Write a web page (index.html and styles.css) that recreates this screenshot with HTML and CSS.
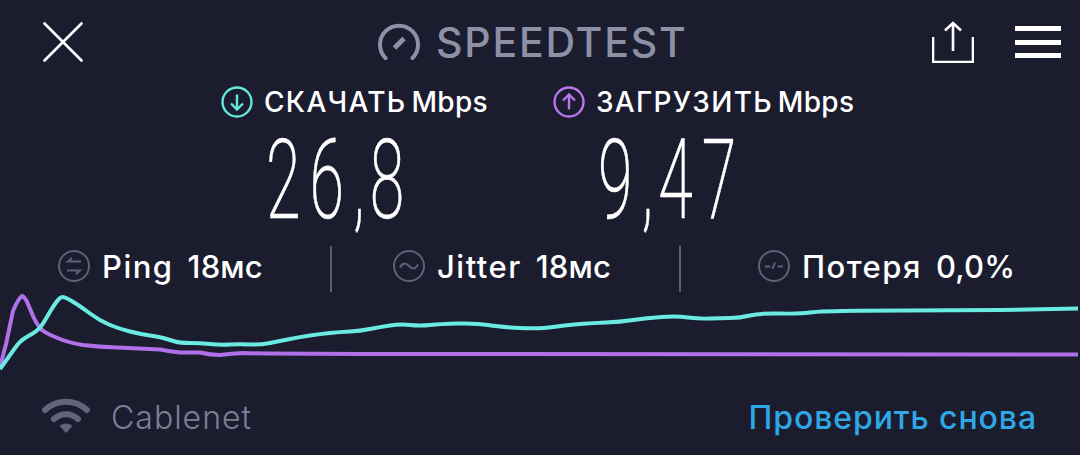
FILE: index.html
```html
<!DOCTYPE html>
<html lang="ru">
<head>
<meta charset="utf-8">
<title>Speedtest</title>
<link rel="stylesheet" href="styles.css">
</head>
<body>
<main class="screen">
  <header class="top">
    <svg class="ic-close" viewBox="0 0 40 40"><path d="M1.500 1.500 38.500 38.500M38.500 1.500 1.500 38.500"/></svg>
    <div class="brand">
      <svg class="ic-gauge" viewBox="0 0 42 38"><path d="M7.500 35A19 19 0 1 1 34.500 35"/><path class="needle" d="M16.500 25 26 15.500"/></svg>
      <span class="brand-name">SPEEDTEST</span>
    </div>
    <svg class="ic-share" viewBox="0 0 42 42"><path d="M1 16V41H41V16"/><path d="M21 30V2M13 9.500 21 2 29 9.500"/></svg>
    <div class="menu"><i></i><i></i><i></i></div>
  </header>
  <section class="labels">
    <div class="label">
      <svg class="ic-round dl" viewBox="0 0 32 32"><circle cx="16" cy="16" r="14.500"/><path d="M16 8.500V23M10 17.500 16 23.500 22 17.500"/></svg>
      <span class="label-a">СКАЧАТЬ</span><span class="label-b">Mbps</span>
    </div>
    <div class="label">
      <svg class="ic-round ul" viewBox="0 0 32 32"><circle cx="16" cy="16" r="14.500"/><path d="M16 23.500V9M10 14.500 16 8.500 22 14.500"/></svg>
      <span class="label-a">ЗАГРУЗИТЬ</span><span class="label-b">Mbps</span>
    </div>
  </section>
  <section class="values">
    <div class="value">26<span class="comma">,</span>8</div>
    <div class="value">9<span class="comma">,</span>47</div>
  </section>
  <section class="stats">
    <div class="stat stat-ping">
      <svg class="ic-stat" viewBox="0 0 32 32"><circle cx="16" cy="16" r="15"/><path d="M23 11.500H10L14 8M9 20.500H22L18 24"/></svg>
      <span class="stat-name">Ping</span><span class="stat-val">18мс</span>
    </div>
    <div class="stat stat-jitter">
      <svg class="ic-stat" viewBox="0 0 32 32"><circle cx="16" cy="16" r="15"/><path d="M7 17.500C10 12 13 13 16 16S22 20 25 14.500"/></svg>
      <span class="stat-name">Jitter</span><span class="stat-val">18мс</span>
    </div>
    <div class="stat stat-loss">
      <svg class="ic-stat" viewBox="0 0 32 32"><circle cx="16" cy="16" r="15"/><path d="M7 16.500H12.500M14.500 19 17 12.500M19.500 16.500H25"/></svg>
      <span class="stat-name">Потеря</span><span class="stat-val">0,0%</span>
    </div>
  </section>
  <svg class="chart" viewBox="0 290 1080 85">
    <path class="line-ul" d="M0 368 L6 345 L13 312 Q18 300 22 297 Q25 298 28 305 L33 317 Q37 326 42 331 Q47 335 60 340 Q70 344 83 346 Q100 348 117 348.500 L160 350.500 Q170 352.500 180 353.500 L200 353.500 Q210 356 220 356 Q232 354.500 243 354 Q255 354.500 267 354.500 L360 355 L1078 355.500"/>
    <path class="line-dl" d="M0 370 L15 349 Q20 342 25 339 Q30 336 33.500 334 Q37 332 40 328.500 Q43 325 47.500 317 Q52 309 56 303.500 Q60 298 62.500 298 Q65 298 72.500 302.500 Q80 307 90 314.500 Q100 322 110 326 Q120 330 130 332.500 Q140 335 150 336.500 Q160 338 165 339.500 Q170 341 175 342.500 Q180 344 190 344 Q200 344 210 345 Q220 346 230 345.500 Q240 345 250 345.500 Q260 346 270 344 Q280 342 290 340 Q300 338 310 336.500 Q320 335 330 334 Q340 333 350 332.500 Q360 332 370 330 Q380 328 390 326.500 Q400 325 410 326 Q420 327 430 326 Q440 325 458 324.500 Q477 324 488 326 Q500 328 520 329 Q540 330 553 328 Q567 326 580 325 Q593 324 606 323.500 Q620 323 633 321 Q647 319 662 318 Q677 317 688 318.500 Q700 320 710 319.500 Q720 319 730 319 Q740 319 750 316.500 Q760 314 780 314.500 Q800 315 810 313.500 Q820 312 860 311.700 L1000 311 L1078 309.500"/>
  </svg>
  <footer class="bottom">
    <svg class="ic-wifi" viewBox="0 0 48 36"><path class="arc" d="M3 13C15 2 33 2 45 13"/><path class="arc" d="M12 22C19 15.500 29 15.500 36 22"/><path class="dot" d="M17.500 29C21 25.500 27 25.500 30.500 29L24 36Z"/></svg>
    <span class="network">Cablenet</span>
    <a class="retry">Проверить снова</a>
  </footer>
</main>
</body>
</html>
```
FILE: styles.css
```css
* { box-sizing: border-box; }
html, body { margin: 0; padding: 0; }
body { background: #1b1d2f; font-family: Inter, "Noto Sans", sans-serif; color: #fff; }
.screen { width: 1080px; height: 455px; overflow: hidden; display: flex; flex-direction: column; }

.top { height: 84px; display: flex; align-items: center; padding: 0 19px 0 43px; }
.ic-close { width: 40px; height: 40px; fill: none; stroke: #fff; stroke-width: 2.600; stroke-linecap: round; }
.brand { display: flex; align-items: center; margin-left: 295px; gap: 16px; }
.ic-gauge { width: 42px; height: 38px; fill: none; stroke: #8e90a6; stroke-width: 4; stroke-linecap: round; }
.ic-gauge .needle { stroke-width: 5; stroke-linecap: butt; }
.brand-name { font-size: 41px; font-weight: 500; color: #8e90a6; line-height: 1; letter-spacing: 1.800px; }
.ic-share { width: 42px; height: 42px; margin-left: auto; fill: none; stroke: #fff; stroke-width: 2.600; }
.menu { width: 46px; height: 32px; margin-left: 41px; display: flex; flex-direction: column; justify-content: space-between; }
.menu i { display: block; height: 5px; background: #fff; }

.labels, .values { display: grid; grid-template-columns: 332px 332px; padding-left: 221px; }
.labels { height: 36px; }
.label { display: flex; align-items: center; }
.ic-round { width: 32px; height: 32px; fill: none; stroke-width: 2.400; margin-right: 11px; }
.ic-round.dl { stroke: #63e8e0; }
.ic-round.ul { stroke: #b976ee; }
.label-a, .label-b { font-size: 28px; font-weight: 500; line-height: 1; }
.label-a { letter-spacing: 1.300px; }
.label-b { margin-left: 5px; letter-spacing: 0.300px; }

.values { height: 111px; padding-top: 4px; }
.value { padding-left: 45px; font-family: Roboto, sans-serif; font-weight: 200; font-size: 112px; line-height: 111px; letter-spacing: 16px; -webkit-text-stroke: 0.700px #fff; transform: scaleX(.56); transform-origin: 45px 50%; white-space: nowrap; }
.comma { letter-spacing: 9px; }

.stats { height: 46px; margin-top: 15px; display: flex; align-items: stretch; padding-left: 58px; }
.stat { display: flex; align-items: center; padding-bottom: 6px; }
.stat-ping { width: 272px; }
.stat-jitter, .stat-loss { border-left: 2px solid #5c5e72; }
.stat-jitter { width: 349px; padding-left: 61px; }
.stat-loss { padding-left: 77px; }
.ic-stat { width: 32px; height: 32px; fill: none; stroke: #5f6174; stroke-width: 2; margin-right: 12px; }
.stat-name, .stat-val { font-size: 31px; font-weight: 500; line-height: 1; }
.stat-name { letter-spacing: 1.500px; }
.stat-val { margin-left: 14px; letter-spacing: 0.200px; }

.chart { display: block; width: 1080px; height: 85px; margin-top: -3px; }
.chart path { fill: none; stroke-width: 4; stroke-linejoin: round; }
.line-dl { stroke: #69ebe3; }
.line-ul { stroke: #b070ea; }

.bottom { flex: 1; display: flex; align-items: center; padding: 0 43px 0 42px; }
.ic-wifi { width: 48px; height: 36px; fill: none; margin-right: 21px; }
.ic-wifi .arc { stroke: #62647a; stroke-width: 6; stroke-linecap: round; }
.ic-wifi .dot { fill: #62647a; }
.network { font-size: 32px; font-weight: 300; color: #7e8096; letter-spacing: 1px; padding-top: 6px; }
.retry { margin-left: auto; font-size: 32px; font-weight: 500; color: #2fa7e6; letter-spacing: 0.900px; padding-top: 6px; }
```
